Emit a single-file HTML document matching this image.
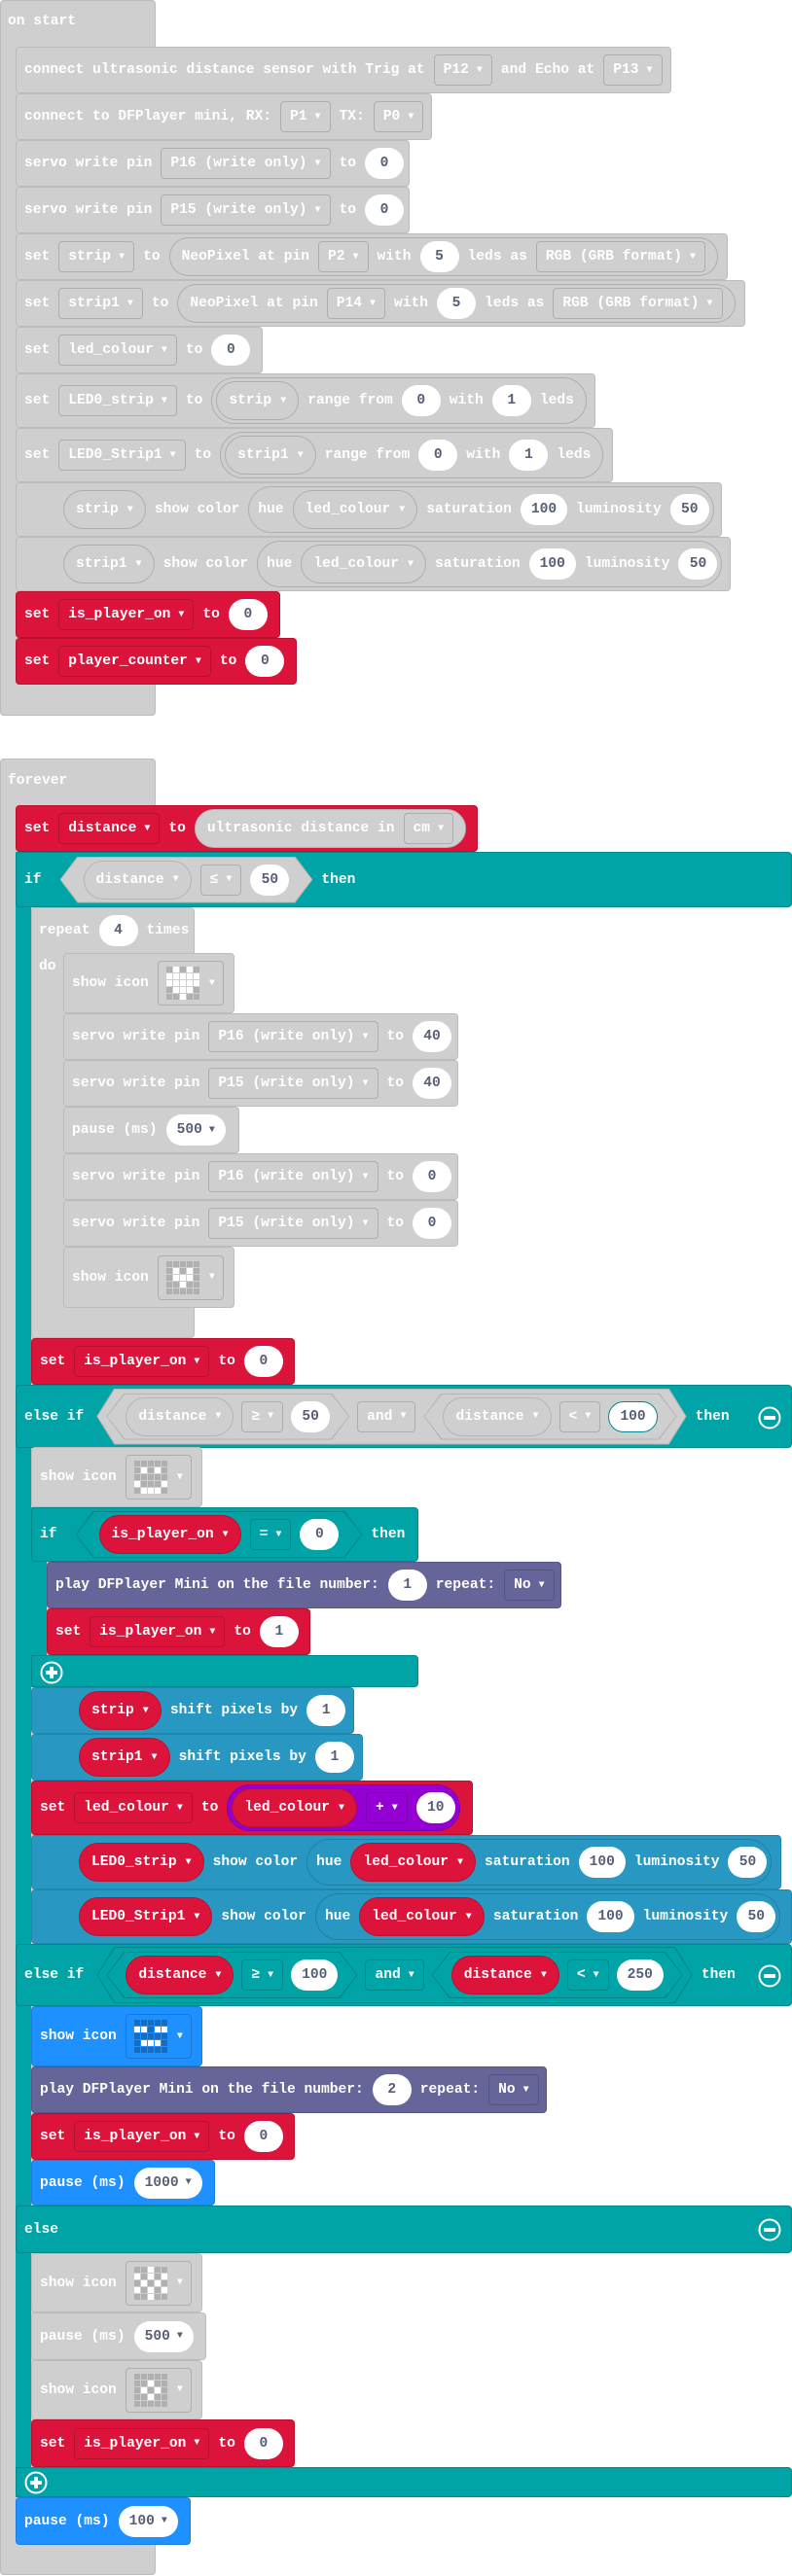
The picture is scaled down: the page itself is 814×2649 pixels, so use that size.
<!DOCTYPE html>
<html><head><meta charset="utf-8">
<style>
*{box-sizing:border-box}
body{margin:0;width:814px;height:2649px;background:#fff;position:relative;overflow:hidden;font:bold 14.6px "Liberation Mono",monospace;color:#fff}
.abs{position:absolute}
.b{position:absolute;display:flex;align-items:center;gap:9px;padding-left:8px;white-space:nowrap;border-radius:4px}
.g{background:#cfcfcf;border:1px solid #bcbcbc}
.r{background:#dc143c;border:1px solid #b8102f}
.t{background:#00a4a6;border:1px solid #008a8c}
.p{background:#65659a;border:1px solid #55558a}
.bl{background:#2898c2;border:1px solid #1f86ad}
.sb{background:#1e90ff;border:1px solid #1a7ee0}
.dd{height:32px;border:1px solid rgba(0,0,0,.16);border-radius:4px;padding:0 9px;display:flex;align-items:center;gap:8px}
.a{font-size:10px}
.n{height:32px;min-width:40px;border-radius:16px;background:#fff;color:#575e75;display:flex;align-items:center;justify-content:center;padding:0 11px;gap:7px}
.pl{height:40px;border-radius:20px;border:1px solid rgba(0,0,0,.16);padding:0 12px;display:flex;align-items:center;gap:9px}
.plr{background:#dc143c;border-color:#b8102f}
.hx{position:relative;isolation:isolate;display:flex;align-items:center;gap:9px;padding:0 24px;height:48px}
.hx::before,.hx::after{content:"";position:absolute;z-index:-1;clip-path:polygon(18px 0,calc(100% - 18px) 0,100% 50%,calc(100% - 18px) 100%,18px 100%,0 50%)}
.hx::before{inset:0;background:#b5b5b5}
.hx::after{inset:1px;background:#cfcfcf}
.hxt::before{background:#008487}.hxt::after{background:#00a4a6}
.ei{height:58px;padding:0 10px;margin-left:4px;gap:8px}
.ei .hx{padding:0 20px;gap:8px}
.ic{height:46px;border:1px solid rgba(0,0,0,.16);border-radius:4px;padding:0 8px;display:flex;align-items:center;gap:10px}
.grid{display:grid;grid-template-columns:repeat(5,6px);gap:1px}
.grid i{width:6px;height:6px;background:rgba(0,0,0,.15)}
.grid i.w{background:#fff}
.sbg i{background:rgba(0,0,0,.25)}
</style></head><body>

<!-- ON START -->
<div class="abs g" style="left:0;top:0;width:160px;height:736px;border-radius:4px"></div>
<div class="abs" style="left:8px;top:14px">on start</div>

<div class="b g" style="left:16px;top:48px;width:674px;height:48px">connect ultrasonic distance sensor with Trig at<span class="dd">P12<span class="a">▼</span></span>and Echo at<span class="dd">P13<span class="a">▼</span></span></div>
<div class="b g" style="left:16px;top:96px;width:428px;height:48px">connect to DFPlayer mini, RX:<span class="dd">P1<span class="a">▼</span></span>TX:<span class="dd">P0<span class="a">▼</span></span></div>
<div class="b g" style="left:16px;top:144px;width:405px;height:48px">servo write pin<span class="dd">P16 (write only)<span class="a">▼</span></span>to<span class="n">0</span></div>
<div class="b g" style="left:16px;top:192px;width:405px;height:48px">servo write pin<span class="dd">P15 (write only)<span class="a">▼</span></span>to<span class="n">0</span></div>
<div class="b g" style="left:16px;top:240px;width:732px;height:48px">set<span class="dd">strip<span class="a">▼</span></span>to<span class="pl">NeoPixel at pin<span class="dd">P2<span class="a">▼</span></span>with<span class="n">5</span>leds as<span class="dd">RGB (GRB format)<span class="a">▼</span></span></span></div>
<div class="b g" style="left:16px;top:288px;width:750px;height:48px">set<span class="dd">strip1<span class="a">▼</span></span>to<span class="pl">NeoPixel at pin<span class="dd">P14<span class="a">▼</span></span>with<span class="n">5</span>leds as<span class="dd">RGB (GRB format)<span class="a">▼</span></span></span></div>
<div class="b g" style="left:16px;top:336px;width:254px;height:48px">set<span class="dd">led_colour<span class="a">▼</span></span>to<span class="n">0</span></div>
<div class="b g" style="left:16px;top:384px;width:596px;height:56px">set<span class="dd">LED0_strip<span class="a">▼</span></span>to<span class="pl" style="height:48px;border-radius:24px;padding:0 12px 0 4px">
<span class="pl">strip<span class="a">▼</span></span>range from<span class="n">0</span>with<span class="n">1</span>leds</span></div>
<div class="b g" style="left:16px;top:440px;width:614px;height:56px">set<span class="dd">LED0_Strip1<span class="a">▼</span></span>to<span class="pl" style="height:48px;border-radius:24px;padding:0 12px 0 4px">
<span class="pl">strip1<span class="a">▼</span></span>range from<span class="n">0</span>with<span class="n">1</span>leds</span></div>
<div class="b g" style="left:16px;top:496px;width:726px;height:56px;padding-left:48px"><span class="pl">strip<span class="a">▼</span></span>show color<span class="pl" style="height:48px;border-radius:24px;padding:0 4px 0 9px">hue<span class="pl">led_colour<span class="a">▼</span></span>saturation<span class="n">100</span>luminosity<span class="n">50</span></span></div>
<div class="b g" style="left:16px;top:552px;width:735px;height:56px;padding-left:48px"><span class="pl">strip1<span class="a">▼</span></span>show color<span class="pl" style="height:48px;border-radius:24px;padding:0 4px 0 9px">hue<span class="pl">led_colour<span class="a">▼</span></span>saturation<span class="n">100</span>luminosity<span class="n">50</span></span></div>
<div class="b r" style="left:16px;top:608px;width:272px;height:48px">set<span class="dd">is_player_on<span class="a">▼</span></span>to<span class="n">0</span></div>
<div class="b r" style="left:16px;top:656px;width:289px;height:48px">set<span class="dd">player_counter<span class="a">▼</span></span>to<span class="n">0</span></div>

<!-- FOREVER -->
<div class="abs g" style="left:0;top:780px;width:160px;height:1868px;border-radius:4px"></div>
<div class="abs" style="left:8px;top:795px">forever</div>
<div class="b r" style="left:16px;top:828px;width:475px;height:48px">set<span class="dd">distance<span class="a">▼</span></span>to<span class="pl" style="background:#cfcfcf;border-color:#b5b5b5">ultrasonic distance in<span class="dd">cm<span class="a">▼</span></span></span></div>

<!-- big if structure -->
<div class="abs" style="left:16px;top:876px;width:16px;height:1692px;background:#00a4a6"></div>
<div class="b t" style="left:16px;top:876px;width:798px;height:57px">if<span class="hx" style="margin-left:10px"><span class="pl" style="background:#cfcfcf;border-color:#b5b5b5">distance<span class="a">▼</span></span><span class="dd">≤<span class="a">▼</span></span><span class="n">50</span></span>then</div>

<!-- repeat -->
<div class="abs g" style="left:32px;top:933px;width:168px;height:443px;border-radius:4px"></div>
<div class="b" style="left:32px;top:933px;height:47px">repeat<span class="n">4</span>times</div>
<div class="abs" style="left:40px;top:986px">do</div>
<div class="b g" style="left:65px;top:980px;width:176px;height:62px">show icon<span class="ic"><span class="grid"><i></i><i class="w"></i><i></i><i class="w"></i><i></i><i class="w"></i><i class="w"></i><i class="w"></i><i class="w"></i><i class="w"></i><i class="w"></i><i class="w"></i><i class="w"></i><i class="w"></i><i class="w"></i><i></i><i class="w"></i><i class="w"></i><i class="w"></i><i></i><i></i><i></i><i class="w"></i><i></i><i></i></span><span class="a">▼</span></span></div>
<div class="b g" style="left:65px;top:1042px;width:406px;height:48px">servo write pin<span class="dd">P16 (write only)<span class="a">▼</span></span>to<span class="n">40</span></div>
<div class="b g" style="left:65px;top:1090px;width:406px;height:48px">servo write pin<span class="dd">P15 (write only)<span class="a">▼</span></span>to<span class="n">40</span></div>
<div class="b g" style="left:65px;top:1138px;width:181px;height:48px">pause (ms)<span class="n">500<span class="a">▼</span></span></div>
<div class="b g" style="left:65px;top:1186px;width:406px;height:48px">servo write pin<span class="dd">P16 (write only)<span class="a">▼</span></span>to<span class="n">0</span></div>
<div class="b g" style="left:65px;top:1234px;width:406px;height:48px">servo write pin<span class="dd">P15 (write only)<span class="a">▼</span></span>to<span class="n">0</span></div>
<div class="b g" style="left:65px;top:1282px;width:176px;height:63px">show icon<span class="ic"><span class="grid"><i></i><i></i><i></i><i></i><i></i><i></i><i class="w"></i><i></i><i class="w"></i><i></i><i></i><i class="w"></i><i class="w"></i><i class="w"></i><i></i><i></i><i></i><i class="w"></i><i></i><i></i><i></i><i></i><i></i><i></i><i></i></span><span class="a">▼</span></span></div>

<div class="b r" style="left:32px;top:1376px;width:271px;height:48px">set<span class="dd">is_player_on<span class="a">▼</span></span>to<span class="n">0</span></div>

<div class="b t" style="left:16px;top:1424px;width:798px;height:65px">else if<span class="hx ei"><span class="hx"><span class="pl" style="background:#cfcfcf;border-color:#b5b5b5">distance<span class="a">▼</span></span><span class="dd">≥<span class="a">▼</span></span><span class="n">50</span></span><span class="dd">and<span class="a">▼</span></span><span class="hx"><span class="pl" style="background:#cfcfcf;border-color:#b5b5b5">distance<span class="a">▼</span></span><span class="dd">&lt;<span class="a">▼</span></span><span class="n" style="border:1px solid #008a8c">100</span></span></span>then
<svg class="abs" style="right:10px;top:21px" width="24" height="24"><circle cx="12" cy="12" r="10.5" fill="none" stroke="#fff" stroke-width="2"/><rect x="6" y="10" width="12" height="4" rx="1" fill="#fff"/></svg></div>

<div class="b g" style="left:32px;top:1488px;width:176px;height:62px">show icon<span class="ic"><span class="grid"><i></i><i></i><i></i><i></i><i></i><i></i><i class="w"></i><i></i><i class="w"></i><i></i><i></i><i></i><i></i><i></i><i></i><i class="w"></i><i></i><i></i><i></i><i class="w"></i><i></i><i class="w"></i><i class="w"></i><i class="w"></i><i></i></span><span class="a">▼</span></span></div>

<!-- inner if -->
<div class="abs" style="left:32px;top:1550px;width:16px;height:185px;background:#00a4a6"></div>
<div class="b t" style="left:32px;top:1550px;width:398px;height:56px">if<span class="hx hxt" style="margin-left:10px"><span class="pl plr">is_player_on<span class="a">▼</span></span><span class="dd">=<span class="a">▼</span></span><span class="n">0</span></span>then</div>
<div class="b p" style="left:48px;top:1606px;width:529px;height:48px">play DFPlayer Mini on the file number:<span class="n">1</span>repeat:<span class="dd">No<span class="a">▼</span></span></div>
<div class="b r" style="left:48px;top:1654px;width:271px;height:48px">set<span class="dd">is_player_on<span class="a">▼</span></span>to<span class="n">1</span></div>
<div class="abs t" style="left:32px;top:1702px;width:398px;height:33px;border-radius:0 4px 4px 4px"><svg class="abs" style="left:8px;top:5px" width="24" height="24"><circle cx="12" cy="12" r="10.5" fill="none" stroke="#fff" stroke-width="2"/><rect x="6" y="10" width="12" height="4" rx="1" fill="#fff"/><rect x="10" y="6" width="4" height="12" rx="1" fill="#fff"/></svg></div>

<div class="b bl" style="left:32px;top:1735px;width:332px;height:48px;padding-left:48px"><span class="pl plr">strip<span class="a">▼</span></span>shift pixels by<span class="n">1</span></div>
<div class="b bl" style="left:32px;top:1783px;width:341px;height:48px;padding-left:48px"><span class="pl plr">strip1<span class="a">▼</span></span>shift pixels by<span class="n">1</span></div>
<div class="b r" style="left:32px;top:1831px;width:454px;height:56px">set<span class="dd">led_colour<span class="a">▼</span></span>to<span class="pl" style="height:48px;border-radius:24px;background:#9400d3;border-color:#7a00b0;padding:0 4px 0 4px"><span class="pl plr">led_colour<span class="a">▼</span></span><span class="dd">+<span class="a">▼</span></span><span class="n">10</span></span></div>
<div class="b bl" style="left:32px;top:1887px;width:771px;height:56px;padding-left:48px"><span class="pl plr">LED0_strip<span class="a">▼</span></span>show color<span class="pl" style="height:48px;border-radius:24px;padding:0 4px 0 9px">hue<span class="pl plr">led_colour<span class="a">▼</span></span>saturation<span class="n">100</span>luminosity<span class="n">50</span></span></div>
<div class="b bl" style="left:32px;top:1943px;width:782px;height:56px;padding-left:48px"><span class="pl plr">LED0_Strip1<span class="a">▼</span></span>show color<span class="pl" style="height:48px;border-radius:24px;padding:0 4px 0 9px">hue<span class="pl plr">led_colour<span class="a">▼</span></span>saturation<span class="n">100</span>luminosity<span class="n">50</span></span></div>

<div class="b t" style="left:16px;top:1999px;width:798px;height:64px">else if<span class="hx hxt ei"><span class="hx hxt"><span class="pl plr">distance<span class="a">▼</span></span><span class="dd">≥<span class="a">▼</span></span><span class="n">100</span></span><span class="dd">and<span class="a">▼</span></span><span class="hx hxt"><span class="pl plr">distance<span class="a">▼</span></span><span class="dd">&lt;<span class="a">▼</span></span><span class="n">250</span></span></span>then
<svg class="abs" style="right:10px;top:20px" width="24" height="24"><circle cx="12" cy="12" r="10.5" fill="none" stroke="#fff" stroke-width="2"/><rect x="6" y="10" width="12" height="4" rx="1" fill="#fff"/></svg></div>

<div class="b sb" style="left:32px;top:2063px;width:176px;height:62px">show icon<span class="ic"><span class="grid sbg"><i></i><i></i><i></i><i></i><i></i><i class="w"></i><i class="w"></i><i></i><i class="w"></i><i class="w"></i><i></i><i></i><i></i><i></i><i></i><i></i><i class="w"></i><i class="w"></i><i class="w"></i><i></i><i></i><i></i><i></i><i></i><i></i></span><span class="a">▼</span></span></div>
<div class="b p" style="left:32px;top:2125px;width:530px;height:48px">play DFPlayer Mini on the file number:<span class="n">2</span>repeat:<span class="dd">No<span class="a">▼</span></span></div>
<div class="b r" style="left:32px;top:2173px;width:271px;height:48px">set<span class="dd">is_player_on<span class="a">▼</span></span>to<span class="n">0</span></div>
<div class="b sb" style="left:32px;top:2221px;width:189px;height:47px">pause (ms)<span class="n">1000<span class="a">▼</span></span></div>

<div class="b t" style="left:16px;top:2268px;width:798px;height:49px">else
<svg class="abs" style="right:10px;top:12px" width="24" height="24"><circle cx="12" cy="12" r="10.5" fill="none" stroke="#fff" stroke-width="2"/><rect x="6" y="10" width="12" height="4" rx="1" fill="#fff"/></svg></div>

<div class="b g" style="left:32px;top:2317px;width:176px;height:61px">show icon<span class="ic"><span class="grid"><i></i><i></i><i class="w"></i><i></i><i></i><i class="w"></i><i></i><i class="w"></i><i></i><i class="w"></i><i></i><i class="w"></i><i></i><i class="w"></i><i></i><i class="w"></i><i></i><i class="w"></i><i></i><i class="w"></i><i></i><i></i><i class="w"></i><i></i><i></i></span><span class="a">▼</span></span></div>
<div class="b g" style="left:32px;top:2378px;width:180px;height:49px">pause (ms)<span class="n">500<span class="a">▼</span></span></div>
<div class="b g" style="left:32px;top:2427px;width:176px;height:61px">show icon<span class="ic"><span class="grid"><i></i><i></i><i></i><i></i><i></i><i></i><i></i><i class="w"></i><i></i><i></i><i></i><i class="w"></i><i></i><i class="w"></i><i></i><i></i><i></i><i class="w"></i><i></i><i></i><i></i><i></i><i></i><i></i><i></i></span><span class="a">▼</span></span></div>
<div class="b r" style="left:32px;top:2488px;width:271px;height:49px">set<span class="dd">is_player_on<span class="a">▼</span></span>to<span class="n">0</span></div>

<div class="abs t" style="left:16px;top:2537px;width:798px;height:31px;border-radius:0 4px 4px 4px"><svg class="abs" style="left:8px;top:3px" width="24" height="24"><circle cx="12" cy="12" r="10.5" fill="none" stroke="#fff" stroke-width="2"/><rect x="6" y="10" width="12" height="4" rx="1" fill="#fff"/><rect x="10" y="6" width="4" height="12" rx="1" fill="#fff"/></svg></div>

<div class="b sb" style="left:16px;top:2568px;width:180px;height:49px">pause (ms)<span class="n">100<span class="a">▼</span></span></div>

</body></html>
